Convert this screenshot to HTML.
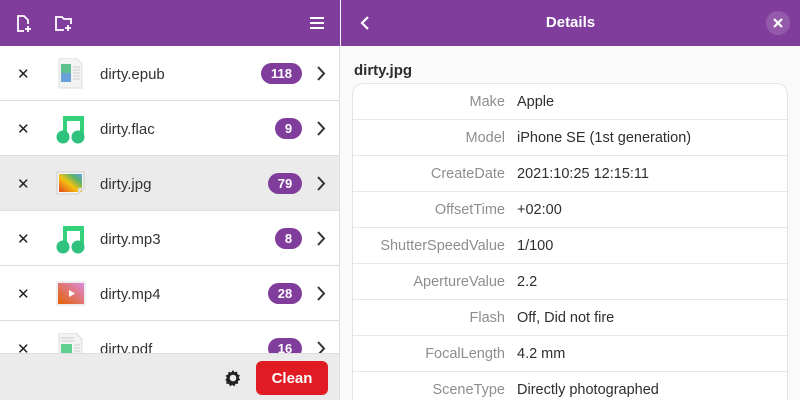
<!DOCTYPE html>
<html style="width:800px;height:400px;overflow:hidden"><head><style>
*{margin:0;padding:0;box-sizing:border-box}
body{width:800px;height:400px;overflow:hidden;font-family:"Liberation Sans","DejaVu Sans",sans-serif;background:#fafafa;position:relative;color:#2e2e2e}
.hdr{position:absolute;top:0;height:46px;background:#813d9c;color:#fff}
#lh{left:0;width:340px}
#rh{left:341px;width:459px}
#left{position:absolute;left:0;top:46px;width:340px;height:354px;background:#fff;border-right:1px solid #ddd;overflow:hidden}
.row{position:absolute;left:0;width:340px;height:55px;border-bottom:1px solid #ddd;background:#fff}
.row.sel{background:#ebebeb}
.x{position:absolute;left:17px;top:19px;font-size:15px;font-weight:bold;color:#222}
.name{position:absolute;left:100px;top:20px;font-size:15px;color:#333}
.badge{position:absolute;top:17px;height:21px;border-radius:11px;background:#813d9c;color:#fff;font-size:13px;font-weight:bold;text-align:center;line-height:21px}
.chev{position:absolute;left:316px;top:20px}
.ic{position:absolute;left:55px;top:12px}
#bot{position:absolute;left:0;top:353px;width:340px;height:47px;background:#ebebeb;border-top:1px solid #ddd;border-right:1px solid #ddd}
#clean{position:absolute;left:256px;top:7px;width:72px;height:34px;background:#e01b24;border-radius:6px;color:#fff;font-weight:bold;font-size:15px;text-align:center;line-height:35px}
#title{position:absolute;left:354px;top:62px;font-weight:bold;font-size:15px;color:#2e2e2e}
#card{position:absolute;left:353px;top:84px;width:434px;height:316px;background:#fff;border-radius:10px 10px 0 0;box-shadow:0 0 0 1px #e4e4e4,0 1px 3px rgba(0,0,0,.08);overflow:hidden}
.kv{height:36px;border-bottom:1px solid #e8e8e8;position:relative;font-size:14.5px}
.k{position:absolute;right:282px;top:10px;color:#8e8e8e}
.v{position:absolute;left:164px;top:10px;color:#2e2e2e}
</style></head><body>
<div class="hdr" id="lh">
<svg style="position:absolute;left:14px;top:14px" width="20" height="20" viewBox="0 0 20 20" fill="none" stroke="#fff" stroke-width="1.8"><path d="M10 17H4V2h6l4 4v4"/><path d="M14 12v6M11 15h6"/></svg>
<svg style="position:absolute;left:54px;top:14px" width="20" height="20" viewBox="0 0 20 20" fill="none" stroke="#fff" stroke-width="1.8"><path d="M10 16H2V3h6l2 2h7v5"/><path d="M14 11v6M11 14h6"/></svg>
<svg style="position:absolute;left:309px;top:15px" width="16" height="16" viewBox="0 0 16 16" stroke="#fff" stroke-width="2"><path d="M1 3h14M1 8h14M1 13h14"/></svg>
</div>
<div class="hdr" id="rh">
<svg style="position:absolute;left:18px;top:15px" width="12" height="16" viewBox="0 0 12 16" fill="none" stroke="#fff" stroke-width="2.2"><path d="M9 2L3 8l6 6"/></svg>
<div style="position:absolute;left:0;width:459px;text-align:center;top:14px;font-weight:bold;font-size:15px">Details</div>
<div style="position:absolute;left:425px;top:11px;width:24px;height:24px;border-radius:12px;background:rgba(255,255,255,.15)"><svg style="position:absolute;left:7px;top:7px" width="10" height="10" viewBox="0 0 10 10" stroke="#fff" stroke-width="2.2"><path d="M1 1l8 8M9 1l-8 8"/></svg></div>
</div>
<div id="left">
<div class="row" style="top:0"><span class="x">✕</span>
<svg class="ic" width="32" height="32"><path d="M4 0h17l6 6v24H4z" fill="#f3f3f3" stroke="#ddd"/><rect x="6" y="6" width="10" height="18" fill="#5fbf8f"/><rect x="6" y="15" width="10" height="9" fill="#6aa0d8"/><path d="M18 9h7M18 12h7M18 15h7M18 18h7M18 21h7" stroke="#ccc"/></svg>
<span class="name">dirty.epub</span><span class="badge" style="left:261px;width:41px">118</span><svg class="chev" width="10" height="15" fill="none" stroke="#333" stroke-width="2"><path d="M2 1l6 6.5L2 14"/></svg></div>
<div class="row" style="top:55px"><span class="x">✕</span>
<svg class="ic" width="32" height="32"><path d="M10 24V5h17v19" stroke="#33d17a" stroke-width="4" fill="none"/><rect x="8" y="3" width="21" height="5" fill="#33d17a"/><circle cx="8" cy="24" r="6.5" fill="#2ec27e"/><circle cx="23" cy="24" r="6.5" fill="#2ec27e"/></svg>
<span class="name">dirty.flac</span><span class="badge" style="left:275px;width:27px">9</span><svg class="chev" width="10" height="15" fill="none" stroke="#333" stroke-width="2"><path d="M2 1l6 6.5L2 14"/></svg></div>
<div class="row sel" style="top:110px"><span class="x">✕</span>
<svg class="ic" width="32" height="32"><defs><linearGradient id="g" x1="0" y1="1" x2="1" y2="0"><stop offset="0" stop-color="#e5461b"/><stop offset=".45" stop-color="#f5c211"/><stop offset=".75" stop-color="#57b36a"/><stop offset="1" stop-color="#62a0ea"/></linearGradient></defs><path d="M2 4h27v16l-6 6H2z" fill="#f6f6f6" stroke="#ccc"/><rect x="4" y="6" width="23" height="18" fill="url(#g)"/><path d="M23 26l6-6h-6z" fill="#ddd"/></svg>
<span class="name">dirty.jpg</span><span class="badge" style="left:268px;width:34px">79</span><svg class="chev" width="10" height="15" fill="none" stroke="#333" stroke-width="2"><path d="M2 1l6 6.5L2 14"/></svg></div>
<div class="row" style="top:165px"><span class="x">✕</span>
<svg class="ic" width="32" height="32"><path d="M10 24V5h17v19" stroke="#33d17a" stroke-width="4" fill="none"/><rect x="8" y="3" width="21" height="5" fill="#33d17a"/><circle cx="8" cy="24" r="6.5" fill="#2ec27e"/><circle cx="23" cy="24" r="6.5" fill="#2ec27e"/></svg>
<span class="name">dirty.mp3</span><span class="badge" style="left:275px;width:27px">8</span><svg class="chev" width="10" height="15" fill="none" stroke="#333" stroke-width="2"><path d="M2 1l6 6.5L2 14"/></svg></div>
<div class="row" style="top:220px"><span class="x">✕</span>
<svg class="ic" width="32" height="32"><defs><linearGradient id="v" x1="0" y1="1" x2="1" y2="0"><stop offset="0" stop-color="#e66100"/><stop offset="1" stop-color="#dc8add"/></linearGradient></defs><rect x="1" y="3" width="30" height="25" rx="2" fill="#eee"/><rect x="3" y="5" width="26" height="21" fill="url(#v)"/><path d="M14 12v7l6-3.5z" fill="#fff"/></svg>
<span class="name">dirty.mp4</span><span class="badge" style="left:268px;width:34px">28</span><svg class="chev" width="10" height="15" fill="none" stroke="#333" stroke-width="2"><path d="M2 1l6 6.5L2 14"/></svg></div>
<div class="row" style="top:275px"><span class="x">✕</span>
<svg class="ic" width="32" height="32"><path d="M4 0h17l6 6v24H4z" fill="#f3f3f3" stroke="#ddd"/><path d="M6 5h13M6 8h13" stroke="#ccc"/><rect x="6" y="11" width="11" height="9" fill="#5fd08f"/><path d="M19 12h6M19 15h6M19 18h6" stroke="#ccc"/></svg>
<span class="name">dirty.pdf</span><span class="badge" style="left:268px;width:34px">16</span><svg class="chev" width="10" height="15" fill="none" stroke="#333" stroke-width="2"><path d="M2 1l6 6.5L2 14"/></svg></div>
</div>
<div id="bot">
<svg style="position:absolute;left:224px;top:15px" width="18" height="18" viewBox="0 0 18 18"><path d="M9 1l1.5 2.2 2.6-.7.3 2.7 2.5 1-1.2 2.4 1.6 2.1-2.4 1.3.2 2.7-2.7.2-1 2.5-2.2-1.5-2.2 1.5-1-2.5-2.7-.2.2-2.7L1.3 11l1.6-2.1L1.7 6.5l2.5-1 .3-2.7 2.6.7z" fill="#222"/><circle cx="9" cy="9" r="3.3" fill="#ebebeb"/></svg>
<div id="clean">Clean</div>
</div>
<div id="title">dirty.jpg</div>
<div id="card">
<div class="kv"><span class="k">Make</span><span class="v">Apple</span></div>
<div class="kv"><span class="k">Model</span><span class="v">iPhone SE (1st generation)</span></div>
<div class="kv"><span class="k">CreateDate</span><span class="v">2021:10:25 12:15:11</span></div>
<div class="kv"><span class="k">OffsetTime</span><span class="v">+02:00</span></div>
<div class="kv"><span class="k">ShutterSpeedValue</span><span class="v">1/100</span></div>
<div class="kv"><span class="k">ApertureValue</span><span class="v">2.2</span></div>
<div class="kv"><span class="k">Flash</span><span class="v">Off, Did not fire</span></div>
<div class="kv"><span class="k">FocalLength</span><span class="v">4.2 mm</span></div>
<div class="kv"><span class="k">SceneType</span><span class="v">Directly photographed</span></div>
</div>
</body></html>
